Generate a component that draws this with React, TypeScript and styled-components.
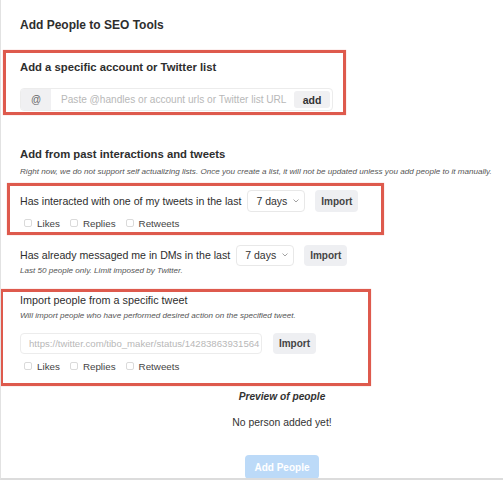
import React from "react";
import styled, { createGlobalStyle } from "styled-components";

const Global = createGlobalStyle`
  html, body { margin: 0; padding: 0; background: #fff; }
  body { font-family: "Liberation Sans", Arial, sans-serif; color: #333; overflow: hidden; }
  * { box-sizing: border-box; }
`;

const Page = styled.div`
  width: 503px;
  height: 480px;
  border-left: 1px solid #e2e2e2;
  border-bottom: 2px solid #dcdcdc;
  padding: 16px 0 0 19px;
  overflow: hidden;
`;

const Title = styled.h1`
  margin: 0;
  font-size: 12px;
  line-height: 18px;
  font-weight: 700;
  color: #2e2e2e;
`;

const Highlight = styled.section<{ $left: number; $width: number; $pt: number; $pb: number; $mt: number }>`
  margin-top: ${(p) => p.$mt}px;
  margin-left: ${(p) => p.$left - 20}px;
  width: ${(p) => p.$width}px;
  border: 3px solid #de5a4d;
  box-shadow: 0 0 1px rgba(222, 90, 77, 0.5);
  padding: ${(p) => p.$pt}px 0 ${(p) => p.$pb}px ${(p) => 20 - p.$left - 3}px;
`;

const SubTitle = styled.h2<{ $weight?: number; $size?: number }>`
  margin: 0;
  font-size: ${(p) => p.$size ?? 11.3}px;
  line-height: 16px;
  font-weight: ${(p) => p.$weight ?? 700};
  color: #2e2e2e;
`;

const Note = styled.p<{ $mt?: number }>`
  margin: ${(p) => p.$mt ?? 0}px 0 0;
  font-size: 8.1px;
  line-height: 11px;
  font-style: italic;
  color: #555;
  white-space: nowrap;
`;

const InputGroup = styled.div`
  margin-top: 13px;
  width: 313px;
  height: 23px;
  display: flex;
  align-items: stretch;
  border: 1px solid #ececec;
  border-radius: 4px;
  overflow: hidden;
`;

const Addon = styled.span`
  width: 30px;
  background: #f0f0f2;
  display: flex;
  align-items: center;
  justify-content: center;
  font-size: 10px;
  color: #666;
`;

const FieldText = styled.span<{ $pad?: number; $size?: number }>`
  flex: 1;
  display: flex;
  align-items: center;
  padding-left: ${(p) => p.$pad ?? 10}px;
  font-size: ${(p) => p.$size ?? 10.1}px;
  color: #b8b8b8;
  white-space: nowrap;
  overflow: hidden;
`;

const AddButton = styled.span`
  margin: 2px 2px 2px 0;
  width: 36px;
  border-radius: 3px;
  background: #f0f0f2;
  display: flex;
  align-items: center;
  justify-content: center;
  font-size: 10.5px;
  font-weight: 700;
  color: #333;
`;

const Section = styled.div`
  margin-top: 31px;
`;

const Row = styled.div<{ $mt?: number }>`
  margin-top: ${(p) => p.$mt ?? 0}px;
  display: flex;
  align-items: center;
  gap: 10px;
  height: 22px;
`;

const RowLabel = styled.span`
  font-size: 10.6px;
  color: #2e2e2e;
  white-space: nowrap;
  margin-right: -4px;
`;

const Select = styled.span<{ $h?: number }>`
  width: 58px;
  height: ${(p) => p.$h ?? 22}px;
  border: 1px solid #e8e8e8;
  border-radius: 4px;
  background: #fff;
  display: flex;
  align-items: center;
  gap: 6px;
  padding-left: 8px;
  font-size: 10.5px;
  color: #333;
`;

const ImportButton = styled.span<{ $h?: number }>`
  width: 43px;
  height: ${(p) => p.$h ?? 22}px;
  border-radius: 4px;
  background: #eeeff2;
  display: flex;
  align-items: center;
  justify-content: center;
  font-size: 10px;
  font-weight: 700;
  color: #444;
`;

const Checks = styled.div<{ $mt: number }>`
  margin-top: ${(p) => p.$mt}px;
  display: flex;
  align-items: center;
  gap: 10px;
  padding-left: 4px;
  height: 12px;
`;

const CheckItem = styled.label`
  display: flex;
  align-items: center;
  gap: 5px;
  font-size: 9.8px;
  color: #444;
`;

const Box = styled.span`
  width: 8px;
  height: 8px;
  border: 1px solid #dadada;
  border-radius: 2px;
  background: #fff;
`;

const UrlInput = styled.div`
  margin-top: 12px;
  display: flex;
  align-items: center;
  gap: 11px;
`;

const UrlField = styled.span`
  width: 242px;
  height: 21px;
  border: 1px solid #ececec;
  border-radius: 4px;
  display: flex;
`;

const Footer = styled.div`
  margin-top: 4px;
  width: 471px;
  padding-left: 53px;
  display: flex;
  flex-direction: column;
  align-items: center;
`;

const PreviewTitle = styled.div`
  font-size: 10.2px;
  line-height: 14px;
  font-weight: 700;
  font-style: italic;
  color: #333;
`;

const Empty = styled.div`
  margin-top: 12px;
  font-size: 10.4px;
  line-height: 14px;
  color: #333;
`;

const PrimaryButton = styled.span`
  margin-top: 25px;
  width: 74px;
  height: 24px;
  border-radius: 4px;
  background: #bcdaf8;
  color: #fff;
  font-size: 10px;
  font-weight: 700;
  display: flex;
  align-items: center;
  justify-content: center;
`;

const Chevron = () => (
  <svg width="6" height="4" viewBox="0 0 6 4" fill="none">
    <path d="M0.8 0.8 L3 3 L5.2 0.8" stroke="#999" strokeWidth="0.9" strokeLinecap="round" />
  </svg>
);

const CheckRow = ({ mt }: { mt: number }) => (
  <Checks $mt={mt}>
    <CheckItem><Box />Likes</CheckItem>
    <CheckItem><Box />Replies</CheckItem>
    <CheckItem><Box />Retweets</CheckItem>
  </Checks>
);

export default function App() {
  return (
    <>
      <Global />
      <Page>
        <Title>Add People to SEO Tools</Title>

        <Highlight $left={3} $width={343} $mt={16} $pt={6} $pb={1}>
          <SubTitle>Add a specific account or Twitter list</SubTitle>
          <InputGroup>
            <Addon>@</Addon>
            <FieldText>Paste @handles or account urls or Twitter list URL</FieldText>
            <AddButton>add</AddButton>
          </InputGroup>
        </Highlight>

        <Section>
          <SubTitle>Add from past interactions and tweets</SubTitle>
          <Note $mt={4}>
            Right now, we do not support self actualizing lists. Once you create a list, it will not be updated unless you add people to it manually.
          </Note>
        </Section>

        <Highlight $left={7} $width={377} $mt={6} $pt={4} $pb={3}>
          <Row>
            <RowLabel>Has interacted with one of my tweets in the last</RowLabel>
            <Select>7 days <Chevron /></Select>
            <ImportButton>Import</ImportButton>
          </Row>
          <CheckRow mt={5} />
        </Highlight>

        <Row $mt={9}>
          <RowLabel>Has already messaged me in DMs in the last</RowLabel>
          <Select $h={21}>7 days <Chevron /></Select>
          <ImportButton $h={21}>Import</ImportButton>
        </Row>
        <Note $mt={-1}>Last 50 people only. Limit imposed by Twitter.</Note>

        <Highlight $left={0} $width={371} $mt={13} $pt={0} $pb={11}>
          <SubTitle $weight={400} $size={10.8}>Import people from a specific tweet</SubTitle>
          <Note $mt={2}>Will import people who have performed desired action on the specified tweet.</Note>
          <UrlInput>
            <UrlField>
              <FieldText $pad={8} $size={9.6}>https://twitter.com/tibo_maker/status/14283863931564</FieldText>
            </UrlField>
            <ImportButton $h={21}>Import</ImportButton>
          </UrlInput>
          <CheckRow mt={6} />
        </Highlight>

        <Footer>
          <PreviewTitle>Preview of people</PreviewTitle>
          <Empty>No person added yet!</Empty>
          <PrimaryButton>Add People</PrimaryButton>
        </Footer>
      </Page>
    </>
  );
}
